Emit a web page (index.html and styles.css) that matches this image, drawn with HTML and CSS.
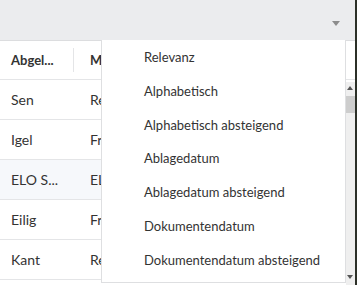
FILE: index.html
```html
<!DOCTYPE html>
<html>
<head>
<meta charset="utf-8">
<link rel="stylesheet" href="styles.css">
</head>
<body>
<div class="screen">
  <div class="app">
    <div class="topbar">
      <span class="caret"></span>
    </div>
    <div class="table">
      <div class="row head">
        <div class="cell c1">Abgel...</div>
        <div class="sep"></div>
        <div class="cell c2">Mandant</div>
      </div>
      <div class="row"><div class="cell c1">Sen</div><div class="cell c2">Rechnung</div></div>
      <div class="row"><div class="cell c1">Igel</div><div class="cell c2">Frage</div></div>
      <div class="row hover"><div class="cell c1">ELO S...</div><div class="cell c2">ELO</div></div>
      <div class="row"><div class="cell c1">Eilig</div><div class="cell c2">Frage</div></div>
      <div class="row"><div class="cell c1">Kant</div><div class="cell c2">Rechnung</div></div>
    </div>
    <div class="dropdown">
      <div class="item">Relevanz</div>
      <div class="item">Alphabetisch</div>
      <div class="item">Alphabetisch absteigend</div>
      <div class="item">Ablagedatum</div>
      <div class="item">Ablagedatum absteigend</div>
      <div class="item">Dokumentendatum</div>
      <div class="item">Dokumentendatum absteigend</div>
    </div>
    <div class="scrollbar">
      <div class="arrow up"></div>
      <div class="thumb"></div>
      <div class="track"></div>
      <div class="arrow down"></div>
    </div>
  </div>
  <div class="edge"></div>
</div>
</body>
</html>
```
FILE: styles.css
```css
* { box-sizing: border-box; }
html, body { margin: 0; padding: 0; }
body {
  width: 357px;
  height: 285px;
  overflow: hidden;
  font-family: "Source Sans Pro", Lato, "Noto Sans", sans-serif;
  color: #333;
  background: #fff;
}
.screen { display: flex; width: 357px; height: 285px; }
.app { position: relative; width: 355px; height: 285px; overflow: hidden; }
.edge { width: 2px; height: 285px; background: #2c3028; }
.topbar {
  height: 41px;
  background: #ebecee;
  border-bottom: 1px solid #dcdddf;
  position: relative;
}
.caret {
  position: absolute;
  left: 332px;
  top: 21px;
  width: 0; height: 0;
  border-left: 4px solid transparent;
  border-right: 4px solid transparent;
  border-top: 5px solid #8c8c8c;
}
.table { display: flex; flex-direction: column; }
.row {
  display: flex;
  align-items: center;
  height: 40px;
  border-bottom: 1px solid #e4e5e7;
  font-size: 14px;
}
.row.head { height: 39px; font-weight: bold; font-size: 13px; }
.row.hover { background: #f6f8fb; }
.cell { white-space: nowrap; overflow: hidden; }
.c1 { width: 90px; padding-left: 11px; }
.head .c1 { width: 73px; }
.sep { width: 1px; height: 24px; background: #e4e5e7; margin-right: 16px; }
.c2 { width: 11px; }
.dropdown {
  position: absolute;
  left: 101px;
  top: 40px;
  width: 245px;
  height: 243px;
  background: #fff;
  border: 1px solid #dedfe1;
  border-top: none;
  padding-top: 1px;
}
.item {
  height: 33.8px;
  line-height: 33.8px;
  padding-left: 42px;
  font-size: 13px;
  color: #333;
  white-space: nowrap;
}
.scrollbar {
  position: absolute;
  left: 346px;
  top: 82px;
  width: 9px;
  height: 203px;
  background: #efefef;
  display: flex;
  flex-direction: column;
}
.arrow { height: 14px; position: relative; }
.arrow.up::before {
  content: "";
  position: absolute;
  left: 1px; top: 4px;
  width: 0; height: 0;
  border-left: 3px solid transparent;
  border-right: 3px solid transparent;
  border-bottom: 4px solid #555;
}
.arrow.down::before {
  content: "";
  position: absolute;
  left: 1px; top: 4px;
  width: 0; height: 0;
  border-left: 3px solid transparent;
  border-right: 3px solid transparent;
  border-top: 4px solid #555;
}
.thumb { height: 17px; background: #cdcdcd; }
.track { flex: 1; }
```
